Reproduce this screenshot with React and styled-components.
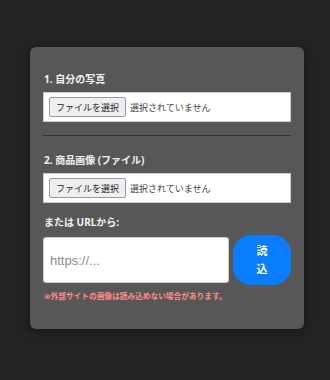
import React from "react"
import styled, { createGlobalStyle } from "styled-components"

const GlobalStyle = createGlobalStyle`
  html, body {
    margin: 0;
    padding: 0;
    background: #232323;
    font-family: "Noto Sans", "Noto Sans CJK JP", sans-serif;
  }
`

const Page = styled.div`
  min-height: 380px;
  padding: 47px 0 0 30px;
  box-sizing: border-box;
`

const Panel = styled.div`
  width: 274px;
  box-sizing: border-box;
  background: #575757;
  border-radius: 6px;
  box-shadow: 0 2px 8px rgba(0, 0, 0, 0.45);
  padding: 25px 13px 28px 13px;
  display: flex;
  flex-direction: column;
`

const Label = styled.div`
  color: #f2f2f2;
  font-size: 10px;
  font-weight: 700;
  line-height: 14px;
  margin-left: 1px;
  margin-top: ${props => props.top || 0}px;
  margin-bottom: 6px;
`

const FileBox = styled.label`
  display: flex;
  align-items: center;
  gap: 4px;
  height: 30px;
  box-sizing: border-box;
  padding: 0 5px;
  background: #fff;
  border: 1px solid #ccc;
  cursor: pointer;

  input {
    display: none;
  }
`

const FileButton = styled.span`
  display: inline-flex;
  align-items: center;
  height: 20px;
  box-sizing: border-box;
  padding: 0 6px;
  background: #efefef;
  border: 1px solid #9a9a9a;
  border-radius: 2px;
  color: #222;
  font-size: 9px;
`

const FileStatus = styled.span`
  color: #444;
  font-size: 9px;
`

const Divider = styled.hr`
  border: none;
  border-top: 1px solid #333;
  margin: 13px 0 17px 0;
`

const UrlRow = styled.div`
  display: flex;
  gap: 4px;
  align-items: center;
`

const UrlInput = styled.input`
  flex: 1;
  min-width: 0;
  height: 46px;
  box-sizing: border-box;
  border: 1px solid #ccc;
  border-radius: 3px;
  padding: 0 6px;
  font-family: "Liberation Sans", Arial, sans-serif;
  font-size: 13px;
  color: #333;
  &::placeholder {
    color: #8a8a8a;
  }
`

const LoadButton = styled.button`
  width: 58px;
  height: 50px;
  border: none;
  border-radius: 18px;
  background: #0a7dff;
  color: #fff;
  font-family: inherit;
  font-size: 11px;
  font-weight: 700;
  line-height: 18px;
  padding: 0;
  cursor: pointer;
`

const Note = styled.div`
  color: #ff8f8a;
  font-size: 7.7px;
  font-weight: 700;
  margin: 6px 0 0 1px;
  line-height: 10px;
`

const FilePicker = () => (
  <FileBox>
    <input type="file" accept="image/*" />
    <FileButton>ファイルを選択</FileButton>
    <FileStatus>選択されていません</FileStatus>
  </FileBox>
)

export default function App() {
  return (
    <Page>
      <GlobalStyle />
      <Panel>
        <Label>1. 自分の写真</Label>
        <FilePicker />
        <Divider />
        <Label>2. 商品画像 (ファイル)</Label>
        <FilePicker />
        <Label top={12}>または URLから:</Label>
        <UrlRow>
          <UrlInput type="text" placeholder="https://..." />
          <LoadButton>
            読<br />込
          </LoadButton>
        </UrlRow>
        <Note>※外部サイトの画像は読み込めない場合があります。</Note>
      </Panel>
    </Page>
  )
}
